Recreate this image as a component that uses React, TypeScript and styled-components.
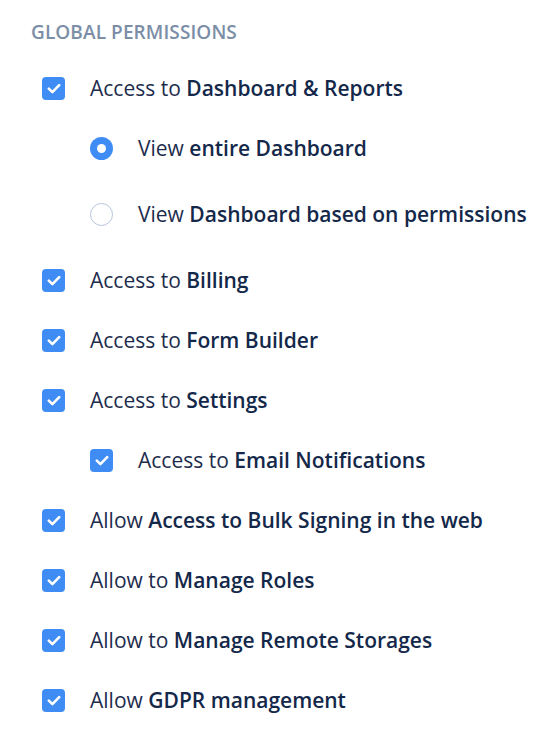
import * as React from 'react';
import styled, { createGlobalStyle } from 'styled-components';

const GlobalStyle = createGlobalStyle`
  body {
    margin: 0;
    background: #ffffff;
    font-family: "Open Sans", "Noto Sans", sans-serif;
  }
`;

type Option = {
  kind: 'check' | 'radio';
  checked: boolean;
  lead: string;
  strong: string;
};

type Item = Option & {
  children?: Array<Option>;
};

const items: Array<Item> = [
  {
    kind: 'check', checked: true, lead: 'Access to', strong: 'Dashboard & Reports',
    children: [
      { kind: 'radio', checked: true, lead: 'View', strong: 'entire Dashboard' },
      { kind: 'radio', checked: false, lead: 'View', strong: 'Dashboard based on permissions' },
    ],
  },
  { kind: 'check', checked: true, lead: 'Access to', strong: 'Billing' },
  { kind: 'check', checked: true, lead: 'Access to', strong: 'Form Builder' },
  {
    kind: 'check', checked: true, lead: 'Access to', strong: 'Settings',
    children: [
      { kind: 'check', checked: true, lead: 'Access to', strong: 'Email Notifications' },
    ],
  },
  { kind: 'check', checked: true, lead: 'Allow', strong: 'Access to Bulk Signing in the web' },
  { kind: 'check', checked: true, lead: 'Allow to', strong: 'Manage Roles' },
  { kind: 'check', checked: true, lead: 'Allow to', strong: 'Manage Remote Storages' },
  { kind: 'check', checked: true, lead: 'Allow', strong: 'GDPR management' },
];

const Wrapper = styled.div`
  padding: 19px 0 0 31px;
`;

const Heading = styled.div`
  font-size: 19px;
  font-weight: 600;
  letter-spacing: 0.1px;
  color: #7b8ea6;
  line-height: 26px;
`;

const List = styled.div`
  display: flex;
  flex-direction: column;
  margin-top: 13px;
`;

const SubGroup = styled.div<{ $radio: boolean }>`
  display: flex;
  flex-direction: column;
  margin: ${(p) => (p.$radio ? '-3px 0 3px' : '0')};
`;

const Row = styled.label<{ $level: number; $radio: boolean }>`
  display: flex;
  align-items: center;
  height: ${(p) => (p.$radio ? 66 : 60)}px;
  padding-left: ${(p) => 11 + p.$level * 48}px;
  cursor: pointer;
`;

const Box = styled.span`
  width: 23px;
  height: 23px;
  border-radius: 4px;
  background: #3f8cf5;
  display: flex;
  align-items: center;
  justify-content: center;
  flex-shrink: 0;
`;

const Radio = styled.span<{ $on: boolean }>`
  width: 23px;
  height: 23px;
  box-sizing: border-box;
  border-radius: 50%;
  flex-shrink: 0;
  background: ${(p) => (p.$on ? '#3f8cf5' : '#ffffff')};
  border: ${(p) => (p.$on ? 'none' : '1.5px solid #b8c6dc')};
  display: flex;
  align-items: center;
  justify-content: center;

  &::after {
    content: '';
    display: ${(p) => (p.$on ? 'block' : 'none')};
    width: 9px;
    height: 9px;
    border-radius: 50%;
    background: #ffffff;
  }
`;

const Label = styled.span`
  margin-left: 25px;
  font-size: 21px;
  color: #1d2c4c;
  white-space: nowrap;
  line-height: 28px;
`;

const Strong = styled.b`
  font-weight: 600;
  color: #14284a;
`;

const Tick = () => (
  <svg width="14" height="11" viewBox="0 0 14 11" fill="none">
    <path d="M1.8 5.6l3.6 3.5 6.8-7" stroke="#fff" strokeWidth="2.6" strokeLinecap="round" strokeLinejoin="round" />
  </svg>
);

const OptionRow = ({ option, level }: { option: Option; level: number }) => (
  <Row $level={level} $radio={option.kind === 'radio'}>
    {option.kind === 'check' ? (
      <Box>{option.checked && <Tick />}</Box>
    ) : (
      <Radio $on={option.checked} />
    )}
    <Label>
      {option.lead} <Strong>{option.strong}</Strong>
    </Label>
  </Row>
);

const App: React.FC = () => (
  <>
    <GlobalStyle />
    <Wrapper>
      <Heading>GLOBAL PERMISSIONS</Heading>
      <List>
        {items.map((item: Item) => (
          <React.Fragment key={item.strong}>
            <OptionRow option={item} level={0} />
            {item.children && (
              <SubGroup $radio={item.children[0].kind === 'radio'}>
                {item.children.map((child: Option) => (
                  <OptionRow key={child.strong} option={child} level={1} />
                ))}
              </SubGroup>
            )}
          </React.Fragment>
        ))}
      </List>
    </Wrapper>
  </>
);

export default App;
